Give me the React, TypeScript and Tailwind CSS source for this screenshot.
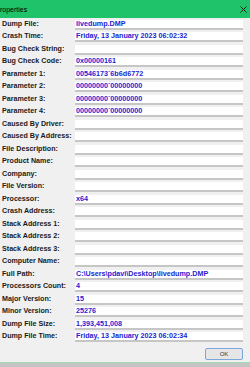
import React from 'react';

type Row = { label: string; value?: string };

const rows: Row[] = [
  { label: 'Dump File:', value: 'livedump.DMP' },
  { label: 'Crash Time:', value: 'Friday, 13 January 2023 06:02:32' },
  { label: 'Bug Check String:' },
  { label: 'Bug Check Code:', value: '0x00000161' },
  { label: 'Parameter 1:', value: '00546173`6b6d6772' },
  { label: 'Parameter 2:', value: '00000000`00000000' },
  { label: 'Parameter 3:', value: '00000000`00000000' },
  { label: 'Parameter 4:', value: '00000000`00000000' },
  { label: 'Caused By Driver:' },
  { label: 'Caused By Address:' },
  { label: 'File Description:' },
  { label: 'Product Name:' },
  { label: 'Company:' },
  { label: 'File Version:' },
  { label: 'Processor:', value: 'x64' },
  { label: 'Crash Address:' },
  { label: 'Stack Address 1:' },
  { label: 'Stack Address 2:' },
  { label: 'Stack Address 3:' },
  { label: 'Computer Name:' },
  { label: 'Full Path:', value: 'C:\\Users\\pdavi\\Desktop\\livedump.DMP' },
  { label: 'Processors Count:', value: '4' },
  { label: 'Major Version:', value: '15' },
  { label: 'Minor Version:', value: '25276' },
  { label: 'Dump File Size:', value: '1,393,451,008' },
  { label: 'Dump File Time:', value: 'Friday, 13 January 2023 06:02:34' },
];

const App: React.FC = () => {
  return (
    <div
      className="w-[250px] h-[367px] bg-[#f0f0f0] flex flex-col overflow-hidden"
      style={{ fontFamily: '"Liberation Sans", Arial, sans-serif' }}
    >
      {/* title bar */}
      <div className="h-[18px] bg-[#1fc46a] flex items-center justify-between pr-[3px]">
        <span className="text-[7px] text-black leading-none">roperties</span>
        <svg width="7" height="7" viewBox="0 0 7 7" className="text-[#1a1a1a]">
          <path d="M0.5 0.5L6.5 6.5M6.5 0.5L0.5 6.5" stroke="currentColor" strokeWidth="1" />
        </svg>
      </div>

      {/* property rows */}
      <div className="pt-[0.25px] flex flex-col">
        {rows.map((r) => (
          <div key={r.label} className="h-[12.5px] flex items-center">
            <div className="w-[75px] pl-[2px] text-[7.15px] font-bold text-[#1a1a1a] leading-none whitespace-nowrap">
              {r.label}
            </div>
            <div className="w-[168px] h-[10px] bg-white border-b-2 border-[#c6c6c6] flex items-center pl-[1px]">
              {r.value && (
                <span className="text-[7.2px] font-bold text-[#2323d2] leading-none whitespace-nowrap">
                  {r.value}
                </span>
              )}
            </div>
          </div>
        ))}
      </div>

      {/* footer */}
      <div className="flex justify-end pr-[7px] mt-[4.75px]">
        <button className="w-[38px] h-[12px] bg-[#e6e6e6] border border-[#7aa6e0] rounded-[2px] flex items-center justify-center text-[6px] text-[#333] leading-none">
          OK
        </button>
      </div>
      <div className="mt-[2px] h-[1px] bg-[#9fdab8]" />
      <div className="flex-1 bg-[#c4c4c4]" />
    </div>
  );
};

export default App;
